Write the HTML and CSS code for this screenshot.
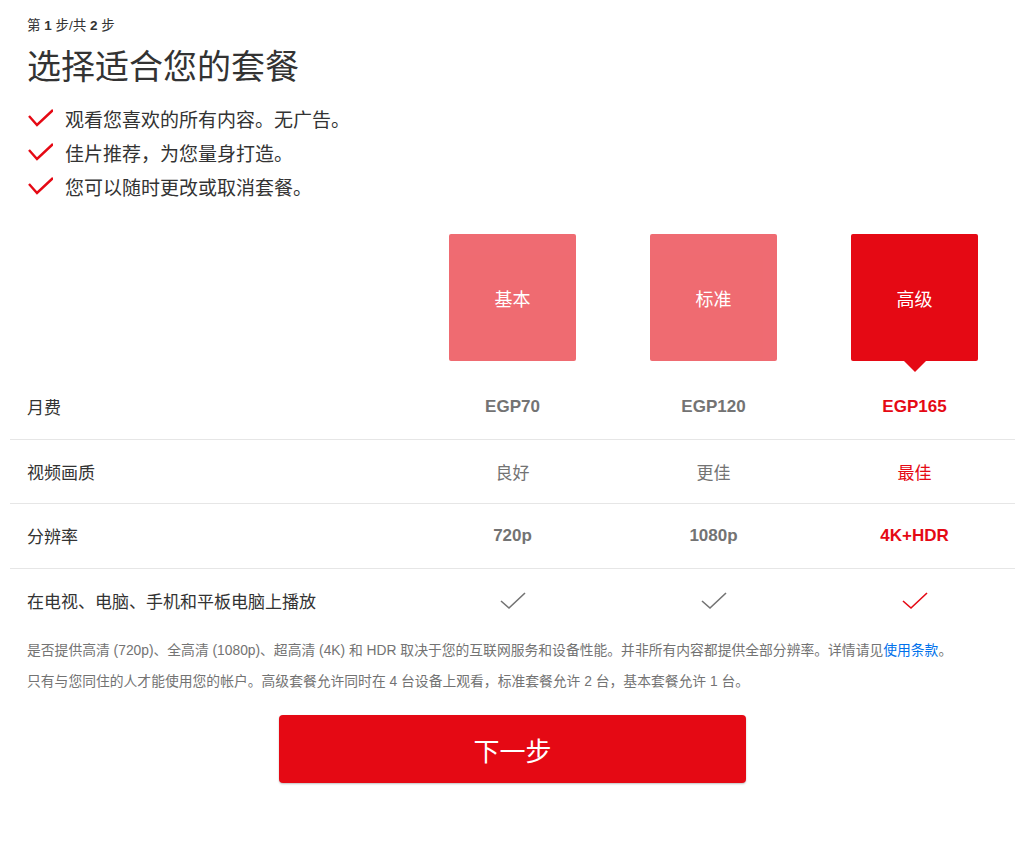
FILE: index.html
```html
<!DOCTYPE html>
<html lang="zh-CN">
<head>
  <meta charset="UTF-8" />
  <meta name="viewport" content="width=device-width, initial-scale=1" />
  <title>选择适合您的套餐</title>
  <link rel="stylesheet" href="styles.css">
</head>
<body>
  <div class="page">
    <!-- Step header and perks -->
    <div class="intro">
      <div class="step">第 <b>1</b> 步/共 <b>2</b> 步</div>
      <h1>选择适合您的套餐</h1>
      <ul class="perks">
        <li>
          <svg class="perk-check" width="26" height="18" viewBox="0 0 26 18"><polyline points="2,7 10,16 26,1" /></svg>
          观看您喜欢的所有内容。无广告。
        </li>
        <li>
          <svg class="perk-check" width="26" height="18" viewBox="0 0 26 18"><polyline points="2,7 10,16 26,1" /></svg>
          佳片推荐，为您量身打造。
        </li>
        <li>
          <svg class="perk-check" width="26" height="18" viewBox="0 0 26 18"><polyline points="2,7 10,16 26,1" /></svg>
          您可以随时更改或取消套餐。
        </li>
      </ul>
    </div>

    <!-- Plan comparison -->
    <div class="plans">
      <div class="plans-head">
        <div></div>
        <div class="cell"><div class="plan-box">基本</div></div>
        <div class="cell"><div class="plan-box">标准</div></div>
        <div class="cell"><div class="plan-box selected">高级</div></div>
      </div>

      <div class="row">
        <div class="label">月费</div>
        <div class="value strong">EGP70</div>
        <div class="value strong">EGP120</div>
        <div class="value strong selected">EGP165</div>
      </div>
      <div class="row">
        <div class="label">视频画质</div>
        <div class="value">良好</div>
        <div class="value">更佳</div>
        <div class="value selected">最佳</div>
      </div>
      <div class="row">
        <div class="label">分辨率</div>
        <div class="value strong">720p</div>
        <div class="value strong">1080p</div>
        <div class="value strong selected">4K+HDR</div>
      </div>
      <div class="row">
        <div class="label">在电视、电脑、手机和平板电脑上播放</div>
        <div class="value"><svg class="tick" width="26" height="18" viewBox="0 0 26 18"><polyline points="1,9 9,16 25,1" /></svg></div>
        <div class="value"><svg class="tick" width="26" height="18" viewBox="0 0 26 18"><polyline points="1,9 9,16 25,1" /></svg></div>
        <div class="value selected"><svg class="tick" width="26" height="18" viewBox="0 0 26 18"><polyline points="1,9 9,16 25,1" /></svg></div>
      </div>
    </div>

    <div class="notes">
      <p>是否提供高清 (720p)、全高清 (1080p)、超高清 (4K) 和 HDR 取决于您的互联网服务和设备性能。并非所有内容都提供全部分辨率。详情请见<a href="#">使用条款</a>。</p>
      <p>只有与您同住的人才能使用您的帐户。高级套餐允许同时在 4 台设备上观看，标准套餐允许 2 台，基本套餐允许 1 台。</p>
    </div>

    <button type="button" class="next">下一步</button>
  </div>
</body>
</html>
```

FILE: styles.css
```css
/* Base styles */
body {
  margin: 0;
  background: #fff;
  color: #333;
  font-family: "Liberation Sans", "Noto Sans CJK SC", sans-serif;
}
.page {
  padding: 0 9px 40px 10px;
}
/* Intro */
.intro {
  padding: 17px 17px 0;
}
.step {
  font-size: 13.5px;
  line-height: 18px;
}
.step b {
  font-weight: bold;
}
h1 {
  margin: 12px 0 0;
  font-size: 34px;
  font-weight: normal;
  line-height: 40px;
}
.perks {
  list-style: none;
  margin: 14px 0 0;
  padding: 0;
}
.perks li {
  display: flex;
  align-items: center;
  gap: 12px;
  height: 34px;
  font-size: 19px;
}
.perk-check polyline {
  fill: none;
  stroke: #e50914;
  stroke-width: 2.4;
}
/* Plan table */
.plans {
  margin-top: 31px;
}
.plans-head,
.row {
  display: grid;
  grid-template-columns: 40% 20% 20% 20%;
}
.cell {
  display: flex;
  justify-content: center;
}
.plan-box {
  position: relative;
  display: flex;
  align-items: center;
  justify-content: center;
  width: 127px;
  height: 127px;
  border-radius: 2px;
  background: #e50914;
  opacity: 0.6;
  color: #fff;
  font-size: 18px;
}
.plan-box.selected {
  opacity: 1;
}
.plan-box.selected::after {
  content: "";
  position: absolute;
  left: 50%;
  bottom: -11px;
  margin-left: -11px;
  border-top: 11px solid #e50914;
  border-left: 11px solid transparent;
  border-right: 11px solid transparent;
}
.row {
  align-items: center;
  height: 64.5px;
  box-sizing: border-box;
  border-bottom: 1px solid #e6e6e6;
  font-size: 17px;
}
.plans-head + .row {
  margin-top: 14px;
}
.row:last-child {
  border-bottom: none;
}
.label {
  padding-left: 17px;
}
.value {
  display: flex;
  justify-content: center;
  color: #737373;
}
.value.strong {
  font-weight: bold;
}
.value.selected {
  color: #e50914;
}
.tick polyline {
  fill: none;
  stroke: currentColor;
  stroke-width: 1.6;
}
/* Footnotes */
.notes {
  margin-top: 8px;
  padding-left: 17px;
}
.notes p {
  margin: 0 0 11px;
  font-size: 13.8px;
  line-height: 20px;
  color: #737373;
}
.notes p:last-child {
  margin-bottom: 0;
}
.notes a {
  color: #0071eb;
  text-decoration: none;
}
/* Button */
.next {
  display: block;
  width: 467px;
  height: 68px;
  margin: 23px auto 0;
  border: none;
  border-radius: 4px;
  background: #e50914;
  box-shadow: 0 1px 2px rgba(0, 0, 0, 0.25);
  color: #fff;
  font-family: inherit;
  font-size: 26px;
  cursor: pointer;
}
.next:hover {
  background: #f6121d;
}
```
